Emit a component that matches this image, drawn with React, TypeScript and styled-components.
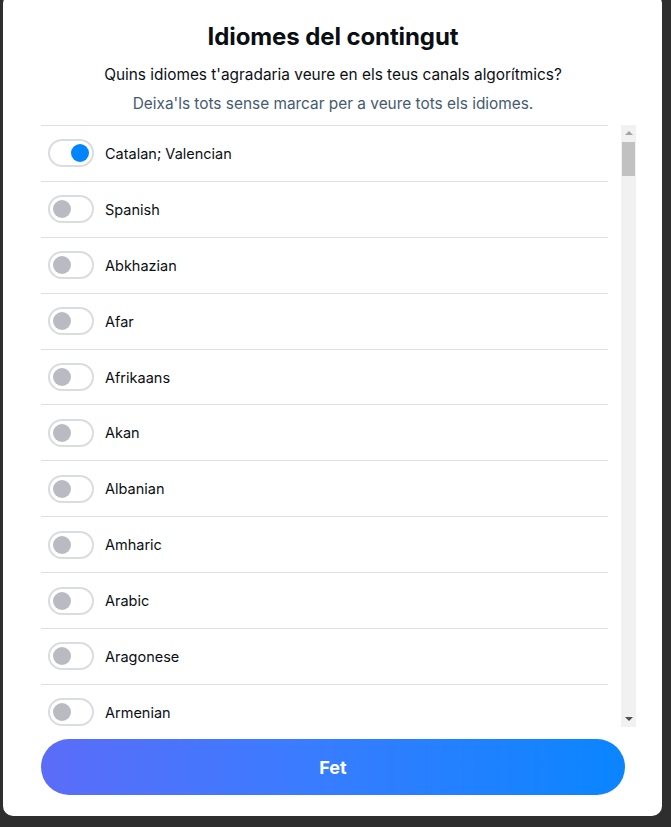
import React, { useEffect, useRef, useState } from 'react';
import styled, { createGlobalStyle } from 'styled-components';

const GlobalStyle = createGlobalStyle`
  html, body {
    margin: 0;
    padding: 0;
    height: 827px;
    overflow: hidden;
    background: #2e2e2e;
  }
  * {
    box-sizing: border-box;
  }
`;

const Backdrop = styled.div`
  width: 671px;
  height: 827px;
  padding-left: 3px;
  font-family: Inter, "Noto Sans", sans-serif;
`;

const Modal = styled.div`
  width: 659px;
  height: 822px;
  margin-top: -6px;
  background: #ffffff;
  border-radius: 10px;
  padding: 27px 37px 21px 38px;
  display: flex;
  flex-direction: column;
`;

const Title = styled.h1`
  margin: 0;
  font-size: 24px;
  line-height: 32px;
  font-weight: 700;
  color: #0b0f14;
  text-align: center;
  letter-spacing: -0.1px;
`;

const Lead = styled.p`
  margin: 12px 0 0;
  font-size: 15.4px;
  line-height: 20px;
  color: #0b0f14;
  text-align: center;
`;

const Hint = styled.p`
  margin: 9px 0 0;
  font-size: 15.4px;
  line-height: 20px;
  color: #455b71;
  text-align: center;
`;

const ListFrame = styled.div`
  margin-top: 11px;
  margin-right: -11px;
  flex: 1;
  min-height: 0;
  display: flex;
`;

const Scroller = styled.div`
  flex: 1;
  min-width: 0;
  overflow-y: scroll;
  padding-right: 13px;
  scrollbar-width: none;

  &::-webkit-scrollbar {
    display: none;
  }
`;

const Rail = styled.div`
  width: 15px;
  flex-shrink: 0;
  background: #f1f1f1;
  display: flex;
  flex-direction: column;
`;

const RailButton = styled.div`
  height: 15px;
  flex-shrink: 0;
  display: flex;
  align-items: center;
  justify-content: center;
`;

const RailTrack = styled.div`
  flex: 1;
  position: relative;
`;

const Thumb = styled.div`
  position: absolute;
  left: 1px;
  right: 1px;
  background: #c1c1c1;
`;

const Row = styled.label`
  display: flex;
  align-items: center;
  gap: 11px;
  height: 55.9px;
  padding-left: 7px;
  border-top: 1px solid #dcdfe3;
  cursor: pointer;
`;

const Track = styled.span<{ $on: boolean }>`
  width: 46px;
  height: 28px;
  border-radius: 14px;
  border: 2px solid #d9dce1;
  background: #ffffff;
  display: flex;
  align-items: center;
  justify-content: ${(p) => (p.$on ? 'flex-end' : 'flex-start')};
  padding: 0 3px;
  flex-shrink: 0;
`;

const Knob = styled.span<{ $on: boolean }>`
  width: 18px;
  height: 18px;
  border-radius: 50%;
  background: ${(p) => (p.$on ? '#0085ff' : '#b9bac2')};
`;

const Name = styled.span`
  font-size: 14.5px;
  color: #0b0f14;
`;

const DoneButton = styled.button`
  margin-top: 12px;
  height: 56px;
  width: 100%;
  border: none;
  border-radius: 28px;
  background: linear-gradient(90deg, #5b6cf8 0%, #3a7cff 45%, #0a85ff 100%);
  color: #ffffff;
  font-family: inherit;
  font-size: 18px;
  font-weight: 700;
  cursor: pointer;
  flex-shrink: 0;
`;

const languages = [
  'Catalan; Valencian', 'Spanish', 'Abkhazian', 'Afar', 'Afrikaans', 'Akan', 'Albanian',
  'Amharic', 'Arabic', 'Aragonese', 'Armenian', 'Assamese', 'Avaric', 'Avestan', 'Aymara',
  'Azerbaijani', 'Bambara', 'Bashkir', 'Basque', 'Belarusian', 'Bengali', 'Bislama',
  'Bosnian', 'Breton', 'Bulgarian', 'Burmese', 'Central Khmer', 'Chamorro', 'Chechen',
  'Chichewa; Chewa; Nyanja', 'Chinese', 'Church Slavic', 'Chuvash', 'Cornish', 'Corsican',
  'Cree', 'Croatian', 'Czech', 'Danish', 'Divehi; Dhivehi; Maldivian', 'Dutch; Flemish',
  'Dzongkha', 'English', 'Esperanto', 'Estonian', 'Ewe', 'Faroese', 'Fijian', 'Finnish',
  'French', 'Fulah', 'Gaelic; Scottish Gaelic', 'Galician', 'Ganda', 'Georgian', 'German',
  'Greek', 'Guarani', 'Gujarati', 'Haitian; Haitian Creole', 'Hausa', 'Hebrew', 'Herero',
  'Hindi', 'Hiri Motu', 'Hungarian', 'Icelandic', 'Ido', 'Igbo', 'Indonesian', 'Interlingua',
  'Interlingue; Occidental', 'Inuktitut', 'Inupiaq', 'Irish', 'Italian', 'Japanese',
  'Javanese', 'Kalaallisut; Greenlandic', 'Kannada', 'Kanuri', 'Kashmiri', 'Kazakh',
  'Kikuyu; Gikuyu', 'Kinyarwanda', 'Kirghiz; Kyrgyz', 'Komi', 'Kongo', 'Korean',
  'Kuanyama; Kwanyama', 'Kurdish', 'Lao', 'Latin', 'Latvian', 'Limburgan', 'Lingala',
  'Lithuanian', 'Luba-Katanga', 'Luxembourgish', 'Macedonian', 'Malagasy', 'Malay',
  'Malayalam', 'Maltese', 'Manx', 'Maori', 'Marathi', 'Marshallese', 'Mongolian', 'Nauru',
  'Navajo; Navaho', 'Ndebele, North', 'Ndebele, South', 'Ndonga', 'Nepali',
  'Northern Sami', 'Norwegian', 'Norwegian Bokmål', 'Norwegian Nynorsk', 'Occitan',
  'Ojibwa', 'Oriya', 'Oromo', 'Ossetian; Ossetic', 'Pali', 'Panjabi; Punjabi', 'Persian',
  'Polish', 'Portuguese', 'Pushto; Pashto', 'Quechua', 'Romanian; Moldavian', 'Romansh',
  'Rundi', 'Russian', 'Samoan', 'Sango', 'Sanskrit', 'Sardinian', 'Serbian', 'Shona',
  'Sichuan Yi; Nuosu', 'Sindhi', 'Sinhala; Sinhalese', 'Slovak', 'Slovenian', 'Somali',
  'Sotho, Southern', 'Sundanese', 'Swahili', 'Swati', 'Swedish', 'Tagalog', 'Tahitian',
  'Tajik', 'Tamil', 'Tatar', 'Telugu', 'Thai', 'Tibetan', 'Tigrinya', 'Tonga',
  'Tsonga', 'Tswana', 'Turkish', 'Turkmen', 'Twi', 'Uighur; Uyghur', 'Ukrainian', 'Urdu',
  'Uzbek', 'Venda', 'Vietnamese', 'Volapük', 'Walloon', 'Welsh', 'Western Frisian',
  'Wolof', 'Xhosa', 'Yiddish', 'Yoruba', 'Zhuang; Chuang', 'Zulu',
];

const Arrow = ({ up, color }: { up?: boolean; color: string }) => (
  <svg width="8" height="5" viewBox="0 0 8 5">
    <path d={up ? 'M0 5 L4 1 L8 5 Z' : 'M0 0 L8 0 L4 4 Z'} fill={color} />
  </svg>
);

export default function App() {
  const [selected, setSelected] = useState<string[]>(['Catalan; Valencian']);
  const [thumb, setThumb] = useState({ top: 2, height: 33 });
  const scrollRef = useRef<HTMLDivElement>(null);
  const trackRef = useRef<HTMLDivElement>(null);

  const measure = () => {
    const el = scrollRef.current;
    const tr = trackRef.current;
    if (!el || !tr) return;
    const trackLen = tr.clientHeight;
    const height = Math.max(20, (trackLen * el.clientHeight) / el.scrollHeight);
    const max = el.scrollHeight - el.clientHeight;
    const top = max > 0 ? ((trackLen - height) * el.scrollTop) / max : 0;
    setThumb({ top: top + 2, height });
  };

  useEffect(() => {
    measure();
  }, []);

  const toggle = (lang: string) => {
    setSelected((prev) =>
      prev.includes(lang) ? prev.filter((l) => l !== lang) : [...prev, lang]
    );
  };

  return (
    <>
      <GlobalStyle />
      <Backdrop>
        <Modal>
          <Title>Idiomes del contingut</Title>
          <Lead>Quins idiomes t'agradaria veure en els teus canals algorítmics?</Lead>
          <Hint>Deixa'ls tots sense marcar per a veure tots els idiomes.</Hint>
          <ListFrame>
            <Scroller ref={scrollRef} onScroll={measure}>
              {languages.map((lang) => {
                const on = selected.includes(lang);
                return (
                  <Row key={lang} onClick={() => toggle(lang)}>
                    <Track $on={on}>
                      <Knob $on={on} />
                    </Track>
                    <Name>{lang}</Name>
                  </Row>
                );
              })}
            </Scroller>
            <Rail>
              <RailButton>
                <Arrow up color="#a3a3a3" />
              </RailButton>
              <RailTrack ref={trackRef}>
                <Thumb style={{ top: thumb.top, height: thumb.height }} />
              </RailTrack>
              <RailButton>
                <Arrow color="#505050" />
              </RailButton>
            </Rail>
          </ListFrame>
          <DoneButton>Fet</DoneButton>
        </Modal>
      </Backdrop>
    </>
  );
}
